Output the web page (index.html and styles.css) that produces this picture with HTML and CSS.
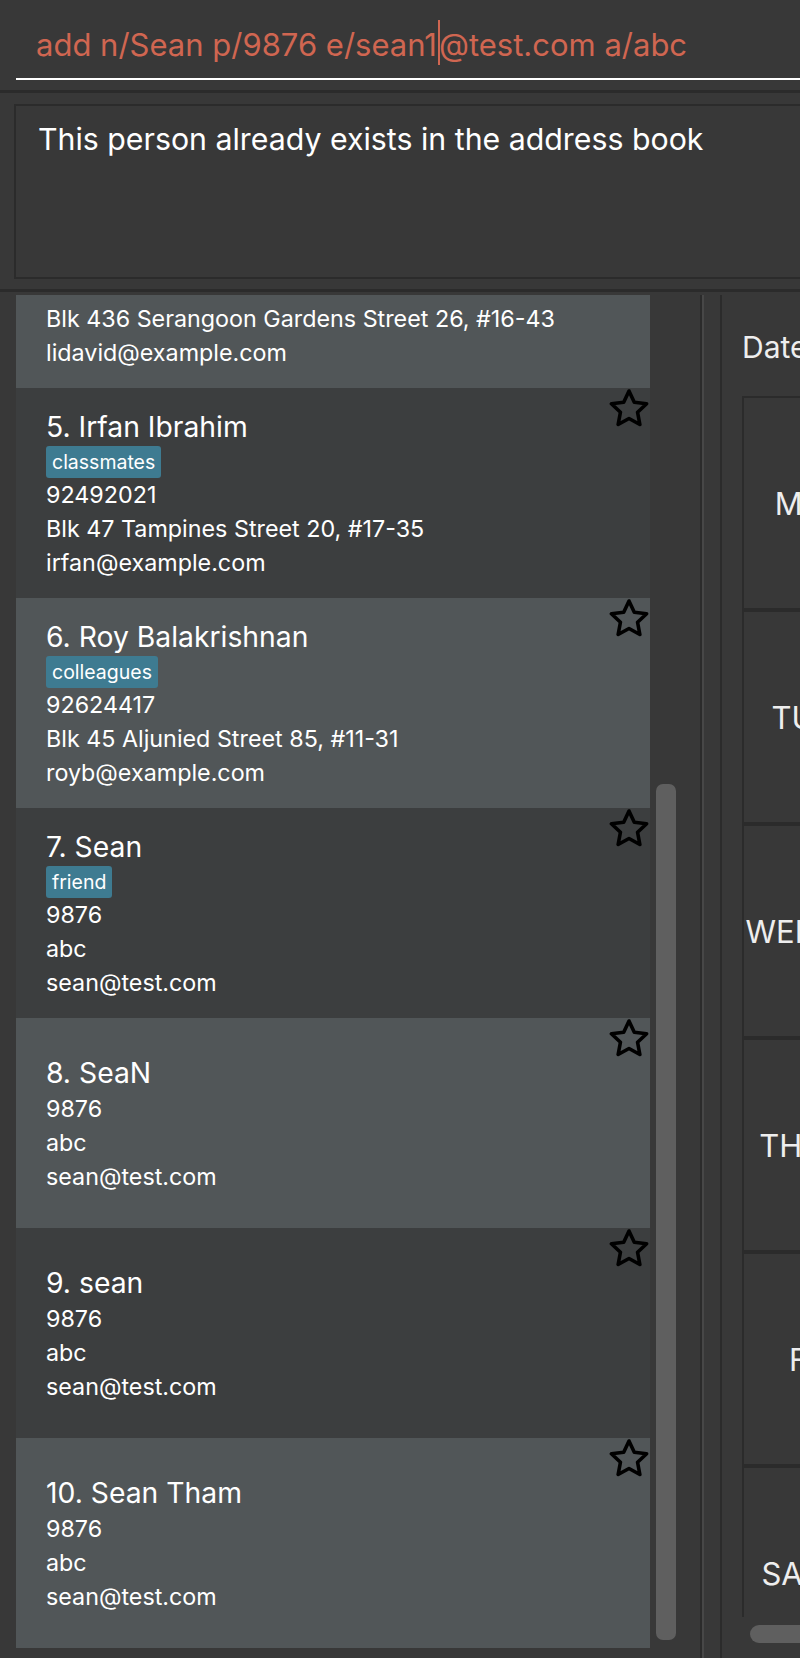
FILE: index.html
```html
<!DOCTYPE html>
<html lang="en">
<head>
<meta charset="utf-8">
<title>Address Book</title>
<link rel="stylesheet" href="styles.css">
</head>
<body>
<div class="app">
  <div class="command-area">
    <div class="command-field">add n/Sean p/9876 e/sean1<span class="caret"></span>@test.com a/abc</div>
  </div>
  <div class="hsplit"></div>
  <div class="result-area">
    <div class="result-box">This person already exists in the address book</div>
  </div>
  <div class="hsplit"></div>
  <div class="main">
    <div class="left">
      <div class="list">
        <div class="card odd">
          <div class="card-body">
            <div class="name">4. David Li</div>
            <div class="tags"><span class="tag">family</span></div>
            <div class="detail">91031282</div>
            <div class="detail">Blk 436 Serangoon Gardens Street 26, #16-43</div>
            <div class="detail">lidavid@example.com</div>
          </div>
          <svg class="star" viewBox="0 0 40 40"><polygon points="20,3 25.29,14.22 37.59,15.78 28.56,24.28 30.87,36.47 20,30.5 9.13,36.47 11.44,24.28 2.41,15.78 14.71,14.22"/></svg>
        </div>
        <div class="card even">
          <div class="card-body">
            <div class="name">5. Irfan Ibrahim</div>
            <div class="tags"><span class="tag">classmates</span></div>
            <div class="detail">92492021</div>
            <div class="detail">Blk 47 Tampines Street 20, #17-35</div>
            <div class="detail">irfan@example.com</div>
          </div>
          <svg class="star" viewBox="0 0 40 40"><polygon points="20,3 25.29,14.22 37.59,15.78 28.56,24.28 30.87,36.47 20,30.5 9.13,36.47 11.44,24.28 2.41,15.78 14.71,14.22"/></svg>
        </div>
        <div class="card odd">
          <div class="card-body">
            <div class="name">6. Roy Balakrishnan</div>
            <div class="tags"><span class="tag">colleagues</span></div>
            <div class="detail">92624417</div>
            <div class="detail">Blk 45 Aljunied Street 85, #11-31</div>
            <div class="detail">royb@example.com</div>
          </div>
          <svg class="star" viewBox="0 0 40 40"><polygon points="20,3 25.29,14.22 37.59,15.78 28.56,24.28 30.87,36.47 20,30.5 9.13,36.47 11.44,24.28 2.41,15.78 14.71,14.22"/></svg>
        </div>
        <div class="card even">
          <div class="card-body">
            <div class="name">7. Sean</div>
            <div class="tags"><span class="tag">friend</span></div>
            <div class="detail">9876</div>
            <div class="detail">abc</div>
            <div class="detail">sean@test.com</div>
          </div>
          <svg class="star" viewBox="0 0 40 40"><polygon points="20,3 25.29,14.22 37.59,15.78 28.56,24.28 30.87,36.47 20,30.5 9.13,36.47 11.44,24.28 2.41,15.78 14.71,14.22"/></svg>
        </div>
        <div class="card odd">
          <div class="card-body">
            <div class="name">8. SeaN</div>
            <div class="detail">9876</div>
            <div class="detail">abc</div>
            <div class="detail">sean@test.com</div>
          </div>
          <svg class="star" viewBox="0 0 40 40"><polygon points="20,3 25.29,14.22 37.59,15.78 28.56,24.28 30.87,36.47 20,30.5 9.13,36.47 11.44,24.28 2.41,15.78 14.71,14.22"/></svg>
        </div>
        <div class="card even">
          <div class="card-body">
            <div class="name">9. sean</div>
            <div class="detail">9876</div>
            <div class="detail">abc</div>
            <div class="detail">sean@test.com</div>
          </div>
          <svg class="star" viewBox="0 0 40 40"><polygon points="20,3 25.29,14.22 37.59,15.78 28.56,24.28 30.87,36.47 20,30.5 9.13,36.47 11.44,24.28 2.41,15.78 14.71,14.22"/></svg>
        </div>
        <div class="card odd">
          <div class="card-body">
            <div class="name">10. Sean Tham</div>
            <div class="detail">9876</div>
            <div class="detail">abc</div>
            <div class="detail">sean@test.com</div>
          </div>
          <svg class="star" viewBox="0 0 40 40"><polygon points="20,3 25.29,14.22 37.59,15.78 28.56,24.28 30.87,36.47 20,30.5 9.13,36.47 11.44,24.28 2.41,15.78 14.71,14.22"/></svg>
        </div>
      </div>
      <div class="vscroll"><div class="vthumb"></div></div>
    </div>
    <div class="vsplit"></div>
    <div class="right">
      <div class="cal-viewport">
        <div class="date-label">Date</div>
        <div class="day-grid">
          <div class="day-row"><div class="day-cell">MONDAY</div><div class="slot-cell"></div></div>
          <div class="day-row"><div class="day-cell">TUESDAY</div><div class="slot-cell"></div></div>
          <div class="day-row"><div class="day-cell">WEDNESDAY</div><div class="slot-cell"></div></div>
          <div class="day-row"><div class="day-cell">THURSDAY</div><div class="slot-cell"></div></div>
          <div class="day-row"><div class="day-cell">FRIDAY</div><div class="slot-cell"></div></div>
          <div class="day-row"><div class="day-cell">SATURDAY</div><div class="slot-cell"></div></div>
        </div>
      </div>
      <div class="hscroll"><div class="hthumb"></div></div>
    </div>
  </div>
</div>
</body>
</html>
```

FILE: styles.css
```css
* { box-sizing: border-box; }
html, body { margin: 0; padding: 0; }
body {
  width: 800px;
  height: 1658px;
  overflow: hidden;
  background: #383838;
  font-family: Inter, "Noto Sans", sans-serif;
  color: #ffffff;
}
.app { display: flex; flex-direction: column; height: 1658px; width: 800px; overflow: hidden; }

.command-area { flex: none; padding: 0 0 10px 16px; }
.command-field {
  height: 80px;
  padding: 12px 0 0 20px;
  border-bottom: 2px solid #ffffff;
  font-size: 31px;
  line-height: 66px;
  color: #d06651;
  white-space: nowrap;
  overflow: hidden;
}
.caret {
  display: inline-block;
  width: 0;
  height: 45px;
  border-left: 2px solid #d06651;
  vertical-align: -9px;
  margin: 0 -1px 0 1px;
}

.hsplit { flex: none; height: 3px; background: #2b2b2b; }

.result-area { flex: none; padding: 11px 0 10px 14px; }
.result-box {
  height: 175px;
  border: 2px solid #2b2b2b;
  border-right: none;
  padding: 13px 0 0 22px;
  font-size: 30.3px;
  line-height: 40px;
  white-space: nowrap;
}

.main { flex: 1; min-height: 0; display: flex; padding-top: 3px; }

.left { flex: none; width: 700px; display: flex; padding: 0 0 10px 16px; }
.list {
  flex: none;
  width: 634px;
  display: flex;
  flex-direction: column;
  justify-content: flex-end;
  overflow: hidden;
}
.card {
  flex: none;
  height: 210px;
  display: flex;
  padding: 2px 0 0 30px;
}
.card.even { background: #3c3e3f; }
.card.odd { background: #515658; }
.card-body { flex: 1; align-self: center; }
.name { font-size: 28.3px; line-height: 38px; white-space: nowrap; }
.tags { display: flex; gap: 6px; }
.tag {
  height: 32px;
  padding: 0 6px;
  line-height: 32px;
  font-size: 19.5px;
  background: #3e7b91;
  border-radius: 3px;
}
.detail { font-size: 23.3px; line-height: 34px; white-space: nowrap; }
.star {
  flex: none;
  align-self: flex-start;
  width: 40px;
  height: 40px;
  margin: -2px 1px 0 0;
  fill: none;
  stroke: #000000;
  stroke-width: 3.6;
  stroke-linejoin: round;
}

.vscroll {
  flex: none;
  width: 50px;
  padding: 0 24px 8px 6px;
  display: flex;
  flex-direction: column;
  justify-content: flex-end;
}
.vthumb { height: 856px; background: #5f5f5f; border-radius: 7px; }

.vsplit {
  flex: none;
  width: 22px;
  border-left: 2px solid #2b2b2b;
  border-right: 2px solid #2b2b2b;
  background: linear-gradient(to right, #474747 0, #474747 2px, #383838 2px);
}

.right {
  flex: 1;
  min-width: 0;
  display: flex;
  flex-direction: column;
  overflow: hidden;
  padding-bottom: 7px;
}
.cal-viewport { flex: 1; min-height: 0; overflow: hidden; padding: 32px 0 0 20px; }
.date-label {
  font-size: 30px;
  line-height: 40px;
  margin-bottom: 29px;
  color: #eeeeee;
  white-space: nowrap;
}
.day-grid { width: max-content; }
.day-row { display: flex; }
.day-cell {
  width: 202px;
  height: 214px;
  border: 2px solid #2b2b2b;
  display: flex;
  align-items: center;
  justify-content: center;
  font-size: 31px;
  color: #eeeeee;
  white-space: nowrap;
}
.slot-cell { width: 160px; height: 214px; border: 2px solid #2b2b2b; border-left: none; }

.hscroll { flex: none; height: 34px; padding: 8px 0 8px 28px; }
.hthumb { height: 18px; width: 400px; background: #5f5f5f; border-radius: 9px; }
```
